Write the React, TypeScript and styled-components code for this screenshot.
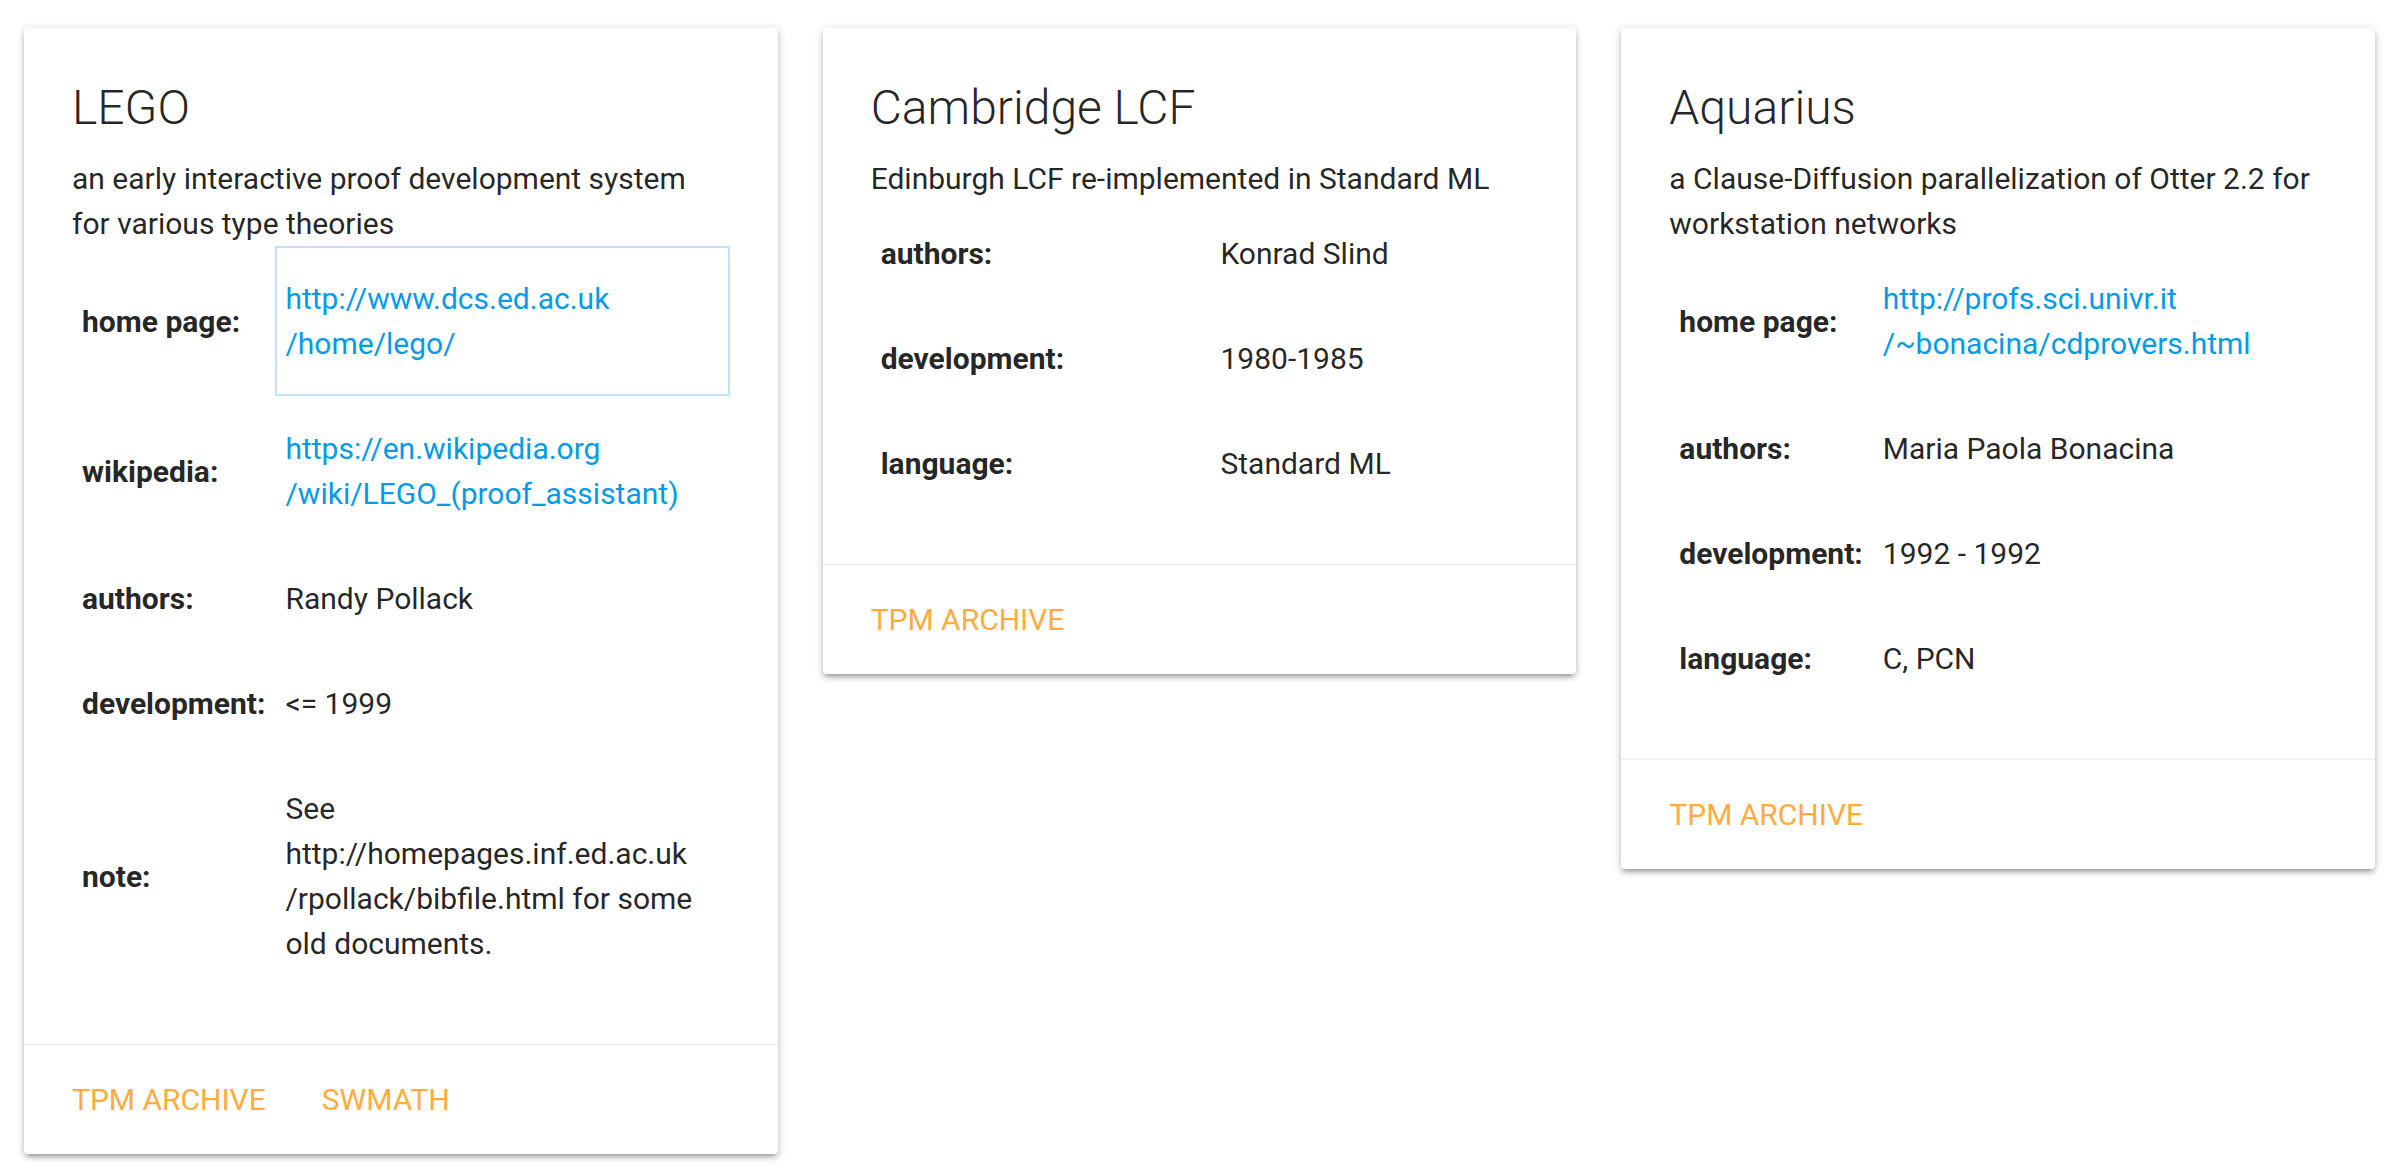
import React from "react";
import styled, { createGlobalStyle } from "styled-components";

const GlobalStyle = createGlobalStyle`
  html {
    overflow: hidden;
  }
  html, body {
    margin: 0;
    padding: 0;
    background: #ffffff;
  }
  body {
    font-family: Roboto, "Noto Sans", "Liberation Sans", sans-serif;
    color: rgba(0, 0, 0, 0.87);
    -webkit-font-smoothing: antialiased;
  }
`;

const Page = styled.main`
  display: grid;
  grid-template-columns: repeat(3, minmax(0, 1fr));
  column-gap: 45px;
  align-items: start;
  padding: 28px 29px 30px 24px;
`;

const Card = styled.article`
  display: flex;
  flex-direction: column;
  background: #ffffff;
  border-radius: 4px;
  box-shadow: 0 4px 4px 0 rgba(0, 0, 0, 0.14), 0 6px 2px -4px rgba(0, 0, 0, 0.12),
    0 2px 10px 0 rgba(0, 0, 0, 0.2);
`;

const CardContent = styled.div`
  padding: 48px;
`;

const Title = styled.h2`
  margin: 0 0 16px;
  font-size: 48px;
  font-weight: 300;
  line-height: 64px;
  color: rgba(0, 0, 0, 0.87);
`;

const Description = styled.p`
  margin: 0;
  font-size: 30px;
  line-height: 45px;
  font-weight: 400;
`;

const InfoTable = styled.table`
  width: 100%;
  border-collapse: collapse;
  border-spacing: 0;
  font-size: 30px;
  line-height: 45px;
`;

const LabelCell = styled.td`
  padding: 30px 10px;
  font-weight: 700;
  vertical-align: middle;
  white-space: nowrap;
  text-align: left;
`;

const ValueCell = styled.td<{ $focused?: boolean }>`
  padding: 30px 10px;
  vertical-align: middle;
  text-align: left;
  font-weight: 400;
  outline: ${(p) => (p.$focused ? "2px solid #c2e0fb" : "none")};
  outline-offset: -2px;
`;

const InfoLink = styled.a`
  color: #039be5;
  text-decoration: none;
`;

const Segment = styled.span`
  white-space: nowrap;
`;

const CardAction = styled.div`
  display: flex;
  gap: 56px;
  border-top: 1px solid rgba(160, 160, 160, 0.2);
  padding: 32px 48px;
`;

const ActionLink = styled.a`
  color: #ffab40;
  font-size: 30px;
  line-height: 45px;
  text-transform: uppercase;
  text-decoration: none;
`;

type Row = {
  label: string;
  lines: string[];
  link?: boolean;
  focused?: boolean;
};

type CardData = {
  title: string;
  description: string;
  rows: Row[];
  actions: string[];
};

const cards: CardData[] = [
  {
    title: "LEGO",
    description:
      "an early interactive proof development system for various type theories",
    rows: [
      {
        label: "home page",
        lines: ["http://www.dcs.ed.ac.uk", "/home/lego/"],
        link: true,
        focused: true,
      },
      {
        label: "wikipedia",
        lines: ["https://en.wikipedia.org", "/wiki/LEGO_(proof_assistant)"],
        link: true,
      },
      { label: "authors", lines: ["Randy Pollack"] },
      { label: "development", lines: ["<= 1999"] },
      {
        label: "note",
        lines: [
          "See",
          "http://homepages.inf.ed.ac.uk",
          "/rpollack/bibfile.html for some",
          "old documents.",
        ],
      },
    ],
    actions: ["TPM archive", "swMATH"],
  },
  {
    title: "Cambridge LCF",
    description: "Edinburgh LCF re-implemented in Standard ML",
    rows: [
      { label: "authors", lines: ["Konrad Slind"] },
      { label: "development", lines: ["1980-1985"] },
      { label: "language", lines: ["Standard ML"] },
    ],
    actions: ["TPM archive"],
  },
  {
    title: "Aquarius",
    description:
      "a Clause-Diffusion parallelization of Otter 2.2 for workstation networks",
    rows: [
      {
        label: "home page",
        lines: ["http://profs.sci.univr.it", "/~bonacina/cdprovers.html"],
        link: true,
      },
      { label: "authors", lines: ["Maria Paola Bonacina"] },
      { label: "development", lines: ["1992 - 1992"] },
      { label: "language", lines: ["C, PCN"] },
    ],
    actions: ["TPM archive"],
  },
];

const renderLines = (lines: string[]) =>
  lines.map((line, i) => (
    <React.Fragment key={i}>
      {i > 0 && <br />}
      {line}
    </React.Fragment>
  ));

const renderUrl = (parts: string[]) =>
  parts.map((part, i) => (
    <React.Fragment key={i}>
      {i > 0 && <wbr />}
      <Segment>{part}</Segment>
    </React.Fragment>
  ));

function InfoCard({ data }: { data: CardData }) {
  return (
    <Card>
      <CardContent>
        <Title>{data.title}</Title>
        <Description>{data.description}</Description>
        <InfoTable>
          <tbody>
            {data.rows.map((row) => (
              <tr key={row.label}>
                <LabelCell>{row.label}:</LabelCell>
                <ValueCell $focused={row.focused}>
                  {row.link ? (
                    <InfoLink href="#">{renderUrl(row.lines)}</InfoLink>
                  ) : (
                    renderLines(row.lines)
                  )}
                </ValueCell>
              </tr>
            ))}
          </tbody>
        </InfoTable>
      </CardContent>
      <CardAction>
        {data.actions.map((a) => (
          <ActionLink key={a} href="#">
            {a}
          </ActionLink>
        ))}
      </CardAction>
    </Card>
  );
}

export default function App() {
  return (
    <>
      <GlobalStyle />
      <Page>
        {cards.map((c) => (
          <InfoCard key={c.title} data={c} />
        ))}
      </Page>
    </>
  );
}
